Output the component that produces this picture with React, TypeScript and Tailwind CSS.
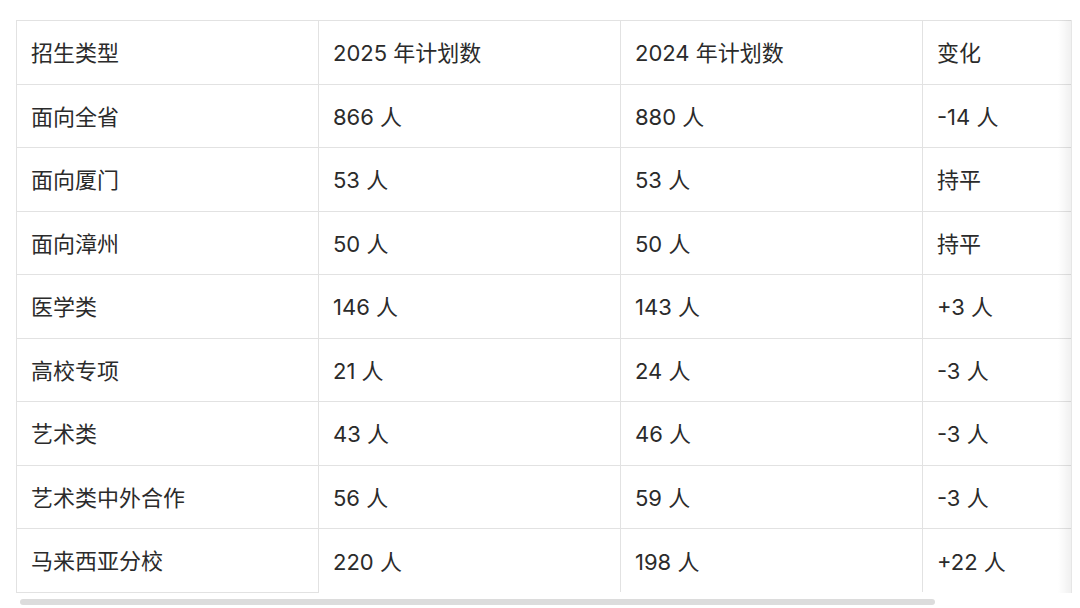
const rows: [string, string, string, string][] = [
  ["面向全省", "866 人", "880 人", "-14 人"],
  ["面向厦门", "53 人", "53 人", "持平"],
  ["面向漳州", "50 人", "50 人", "持平"],
  ["医学类", "146 人", "143 人", "+3 人"],
  ["高校专项", "21 人", "24 人", "-3 人"],
  ["艺术类", "43 人", "46 人", "-3 人"],
  ["艺术类中外合作", "56 人", "59 人", "-3 人"],
  ["马来西亚分校", "220 人", "198 人", "+22 人"],
];

const headers = ["招生类型", "2025 年计划数", "2024 年计划数", "变化"];

export default function App() {
  return (
    <div
      className="w-[1080px] h-[608px] bg-white overflow-hidden text-[#2b2b2b]"
      style={{ fontFamily: 'Inter, "Noto Sans CJK SC", sans-serif' }}
    >
      <div className="pt-[20px] pl-[16px]">
        <div className="relative w-[1056px] overflow-hidden">
          <table className="w-[1208px] border-collapse table-fixed text-[22px]">
            <colgroup>
              <col className="w-[302px]" />
              <col className="w-[302px]" />
              <col className="w-[302px]" />
              <col className="w-[302px]" />
            </colgroup>
            <thead>
              <tr className="h-[63.5px]">
                {headers.map((h) => (
                  <th
                    key={h}
                    className="border border-[#e2e2e2] px-[14px] pt-[3px] text-left font-normal align-middle"
                  >
                    {h}
                  </th>
                ))}
              </tr>
            </thead>
            <tbody>
              {rows.map((r, i) => {
                const last = i === rows.length - 1;
                return (
                  <tr key={r[0]} className="h-[63.5px]">
                    {r.map((c, j) => (
                      <td
                        key={j}
                        className={
                          "border-x border-t border-[#e2e2e2] px-[14px] pt-[3px] align-middle " +
                          (last && j === 0 ? "border-b" : "border-b-0")
                        }
                      >
                        {c}
                      </td>
                    ))}
                  </tr>
                );
              })}
            </tbody>
          </table>
          {/* scroll fade on the right edge */}
          <div className="absolute right-0 top-0 bottom-0 w-[14px] bg-gradient-to-r from-transparent to-[#0000000f] border-r border-[#e6e6e6]" />
        </div>
        {/* horizontal scrollbar */}
        <div className="mt-[6px] ml-[4px] w-[915px] h-[6px] rounded-full bg-[#dcdcdc]" />
      </div>
    </div>
  );
}
